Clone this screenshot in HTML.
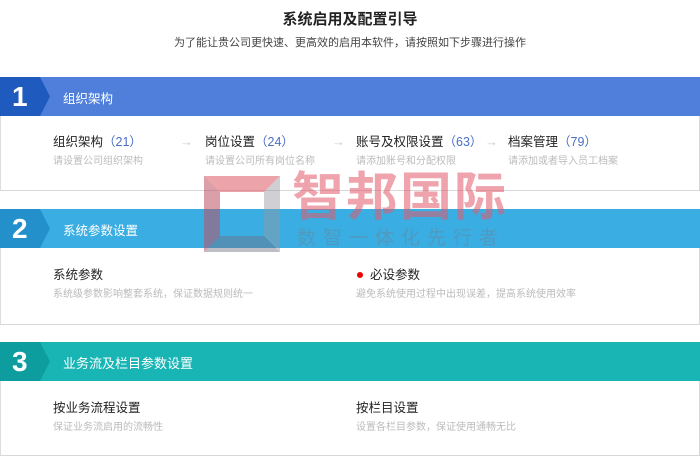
<!DOCTYPE html>
<html><head><meta charset="utf-8"><style>
*{margin:0;padding:0;box-sizing:border-box}
body{width:700px;height:451px;overflow:hidden;background:#fff;font-family:"Liberation Sans","Noto Sans CJK SC",sans-serif;position:relative}
.t{position:absolute;left:0;width:700px;text-align:center}
.hd{position:absolute;left:0;width:700px;height:39px;color:#fff;font-size:12.5px}
.num{position:absolute;left:0;top:0;width:50px;height:39px;clip-path:polygon(0 0,40px 0,50px 50%,40px 100%,0 100%);color:#fff;font-size:28px;font-weight:bold;line-height:39px;padding-left:12px}
.hd span{position:absolute;left:63px;top:11px}
.bx{position:absolute;left:0;width:700px;border:1px solid #d8d8d8;border-top:none;border-left:1px solid #ddd}
.it{position:absolute;font-size:12.5px;color:#222;line-height:16px}
.it b{font-weight:normal;color:#4a6fc7}
.it i{display:block;font-style:normal;font-size:10px;color:#bbb;margin-top:5px;line-height:14px}
.ar{position:absolute;color:#ccc;font-size:13px}
</style></head><body>
<div class="t" style="top:8px;font-size:15px;font-weight:bold;color:#222">系统启用及配置引导</div>
<div class="t" style="top:34px;font-size:11px;color:#444">为了能让贵公司更快速、更高效的启用本软件，请按照如下步骤进行操作</div>

<div class="hd" style="top:77px;background:#4f7fdb"><div class="num" style="background:#1f5bbf">1</div><span>组织架构</span></div>
<div class="bx" style="top:116px;height:75px"></div>
<div class="it" style="left:53px;top:134px">组织架构<b>（21）</b><i>请设置公司组织架构</i></div>
<div class="ar" style="left:180px;top:134px">→</div>
<div class="it" style="left:205px;top:134px">岗位设置<b>（24）</b><i>请设置公司所有岗位名称</i></div>
<div class="ar" style="left:332px;top:134px">→</div>
<div class="it" style="left:356px;top:134px">账号及权限设置<b>（63）</b><i>请添加账号和分配权限</i></div>
<div class="ar" style="left:485px;top:134px">→</div>
<div class="it" style="left:508px;top:134px">档案管理<b>（79）</b><i>请添加或者导入员工档案</i></div>

<div class="hd" style="top:209px;background:#3aade2"><div class="num" style="background:#2390cc">2</div><span>系统参数设置</span></div>
<div class="bx" style="top:248px;height:77px"></div>
<div class="it" style="left:53px;top:267px">系统参数<i>系统级参数影响整套系统，保证数据规则统一</i></div>
<div style="position:absolute;left:357px;top:272px;width:6px;height:6px;border-radius:50%;background:#e00"></div>
<div class="it" style="left:370px;top:267px">必设参数</div>
<div class="it" style="left:356px;top:267px"><span style="visibility:hidden">x</span><i>避免系统使用过程中出现误差，提高系统使用效率</i></div>

<div class="hd" style="top:342px;background:#19b5b5"><div class="num" style="background:#0d9d9f">3</div><span style="font-size:13px">业务流及栏目参数设置</span></div>
<div class="bx" style="top:381px;height:75px"></div>
<div class="it" style="left:53px;top:400px">按业务流程设置<i>保证业务流启用的流畅性</i></div>
<div class="it" style="left:356px;top:400px">按栏目设置<i>设置各栏目参数，保证使用通畅无比</i></div>

<svg style="position:absolute;left:204px;top:176px" width="76" height="76" viewBox="0 0 76 76">
<polygon points="0,0 76,0 60,16 16,16" fill="rgba(220,90,100,.55)"/>
<polygon points="76,0 76,76 60,60 60,16" fill="rgba(150,150,160,.45)"/>
<polygon points="0,0 16,16 16,60 0,76" fill="rgba(190,80,100,.55)"/>
<polygon points="0,76 16,60 60,60 76,76" fill="rgba(110,110,130,.45)"/>
</svg>
<div style="position:absolute;left:292px;top:168px;font-size:52px;font-weight:bold;color:rgba(225,90,105,.55);letter-spacing:2px;line-height:60px">智邦国际</div>
<div style="position:absolute;left:297px;top:227px;font-size:19px;color:rgba(120,120,130,.35);letter-spacing:7px;line-height:24px">数智一体化先行者</div>
</body></html>
